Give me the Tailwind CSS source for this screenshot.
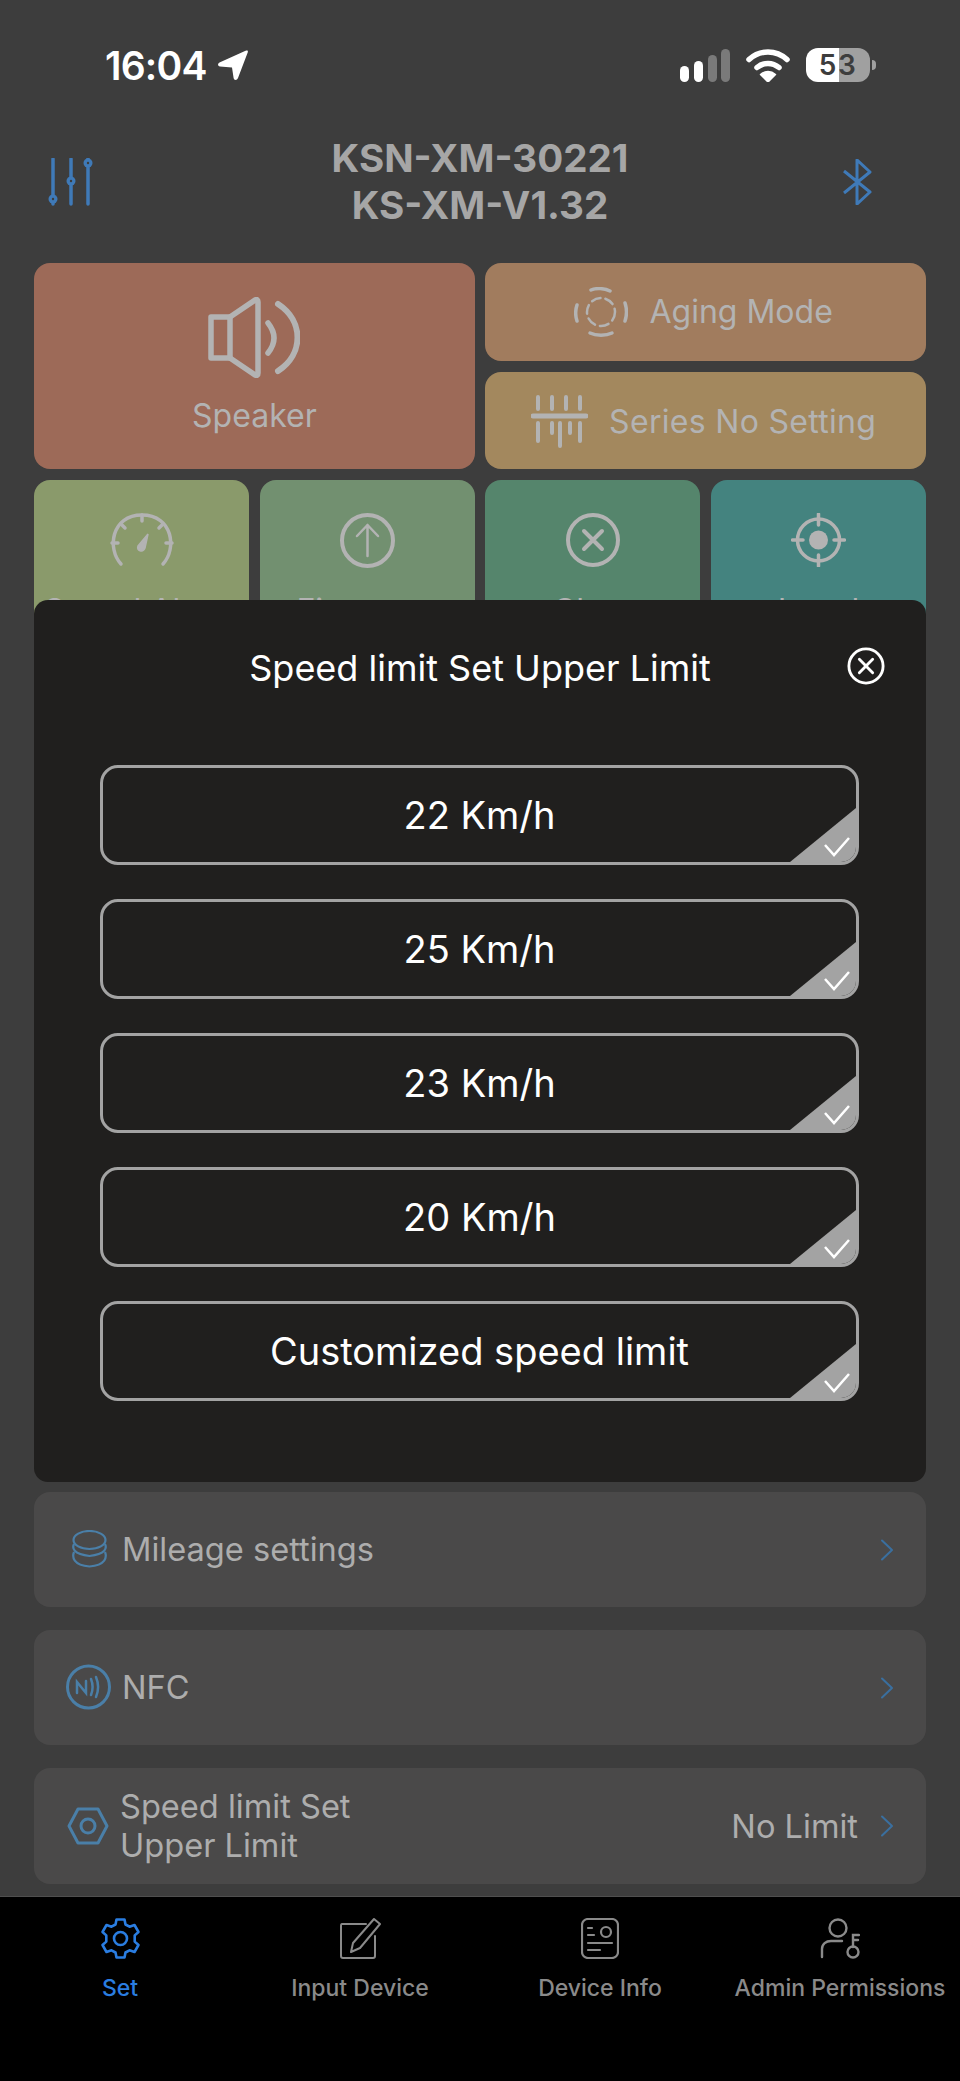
<!DOCTYPE html>
<html lang="en">
<head>
    <meta charset="UTF-8">
    <meta name="viewport" content="width=device-width, initial-scale=1.0">
    <title>Device Settings</title>
    <script src="https://cdn.jsdelivr.net/npm/@tailwindcss/browser@4"></script>
</head>
<body class="bg-[#3d3d3d]">
    <div class="relative flex h-[2081px] w-[960px] flex-col overflow-hidden bg-[#3d3d3d] [font-family:Inter,sans-serif]">

        <!-- status bar -->
        <div class="flex h-[130px] shrink-0 items-center justify-between pl-[105px] pr-[84px]">
            <div class="flex items-center gap-[11px] text-[39px] leading-none font-semibold tracking-[-0.8px] text-white">
                <span>16:04</span>
                <svg class="h-[30px] w-[30px]" viewBox="0 0 30 30"><path fill="#fff" d="M29 0.5 C30 0.5 30 1.5 29.7 2.5 L20 28 C19 30.5 16 30.5 15.6 28 L14 17.5 L2 16.5 C-0.5 16 -0.5 13.5 1.5 12.5 L27 1 C28 0.6 28.5 0.5 29 0.5 Z"/></svg>
            </div>
            <div class="flex items-center">
                <svg class="h-[33px] w-[50px]" viewBox="0 0 50 33">
                    <rect x="0" y="17" width="9" height="16" rx="4.5" fill="#fff"/>
                    <rect x="14" y="12" width="9" height="21" rx="4.5" fill="#fff"/>
                    <rect x="28" y="6" width="9" height="27" rx="4.5" fill="#7a7a7a"/>
                    <rect x="41" y="0" width="9" height="33" rx="4.5" fill="#7a7a7a"/>
                </svg>
                <svg class="ml-[16px] h-[33px] w-[44px]" viewBox="0 0 44 33">
                    <path d="M3 10.5 C14 0.5 30 0.5 41 10.5" fill="none" stroke="#fff" stroke-width="5.5" stroke-linecap="round"/>
                    <path d="M11 18.5 C17.5 13 26.5 13 33 18.5" fill="none" stroke="#fff" stroke-width="5.5" stroke-linecap="round"/>
                    <path d="M22 33 L14.5 25.5 C19 21.5 25 21.5 29.5 25.5 Z" fill="#fff" stroke="#fff" stroke-width="1.5" stroke-linejoin="round"/>
                </svg>
                <div class="relative ml-[16px] flex h-[34px] w-[64px] items-center justify-center overflow-hidden rounded-[12px] bg-[linear-gradient(90deg,#fff_0,#fff_33px,#a0a0a0_33px)] text-[28px] leading-none font-semibold tracking-[1.5px] text-[#3d3d3d]">53</div>
                <div class="ml-[2px] h-[10px] w-[4px] rounded-r-full bg-[#a0a0a0]"></div>
            </div>
        </div>

        <!-- header -->
        <div class="mb-[30px] grid h-[103px] shrink-0 grid-cols-[1fr_auto_1fr] items-center">
            <svg class="ml-[47px] h-[48px] w-[48px] text-[#3f7ab8]" viewBox="0 0 48 48" fill="none" stroke="currentColor" stroke-width="3.5" stroke-linecap="round">
                <path d="M6 1 V46 M24 1 V46 M41 1 V46"/>
                <circle cx="6" cy="41" r="4.5" fill="currentColor" stroke="none"/><circle cx="6" cy="41" r="1.2" fill="#3d3d3d" stroke="none"/>
                <circle cx="24" cy="23" r="4.5" fill="currentColor" stroke="none"/><circle cx="24" cy="23" r="1.2" fill="#3d3d3d" stroke="none"/>
                <circle cx="41" cy="5" r="4.5" fill="currentColor" stroke="none"/><circle cx="41" cy="5" r="1.2" fill="#3d3d3d" stroke="none"/>
            </svg>
            <div class="text-center text-[38.6px] leading-[47px] font-bold text-[#a6a6a6]">
                <div>KSN-XM-30221</div>
                <div>KS-XM-V1.32</div>
            </div>
            <svg class="mr-[88px] h-[46px] w-[29px] justify-self-end text-[#3f7ab8]" viewBox="0 0 29 46" fill="none" stroke="currentColor" stroke-width="3" stroke-linejoin="round">
                <path d="M1 12 L27 33 L14 45 V1 L27 13 L1 34"/>
            </svg>
        </div>

        <!-- function tiles -->
        <div class="grid shrink-0 grid-cols-4 grid-rows-[98px_97px_150px] gap-x-[10.5px] gap-y-[11px] px-[34px] text-[32px] text-[#b3b3b3]">
            <div class="col-span-2 row-span-2 flex flex-col items-center rounded-[16px] bg-[#9d6a58] pt-[34px]">
                <svg class="h-[81px] w-[92px]" viewBox="0 0 92 81" fill="none" stroke="#b3b3b3" stroke-width="5.5" stroke-linejoin="round" stroke-linecap="round">
                    <path d="M3 20 H22 V61 H3 Z"/>
                    <path d="M22 20 L47 3 C49 2 50 3 50 5 V76 C50 78 49 79 47 78 L22 61"/>
                    <path d="M60 26 C68 36 68 46 60 56"/>
                    <path d="M70 7 C96 24 96 57 70 74" stroke-width="6"/>
                </svg>
                <span class="mt-[19px] leading-[38px]">Speaker</span>
            </div>
            <div class="col-span-2 flex items-center justify-center gap-[21px] rounded-[16px] bg-[#a17c5e] pr-[4px]">
                <svg class="h-[50px] w-[54px]" viewBox="0 0 54 50" fill="none" stroke="#b3b3b3" stroke-width="3.5" stroke-linecap="round">
                    <path d="M3 18 C1 24 1 28 3 34"/>
                    <path d="M51 16 C53 22 53 28 51 34"/>
                    <path d="M17 3 C22 1 30 1 36 4"/>
                    <path d="M16 46 C22 49 32 49 38 46"/>
                    <circle cx="27" cy="25" r="14" stroke-width="2.5" stroke-dasharray="9 5"/>
                </svg>
                <span>Aging Mode</span>
            </div>
            <div class="col-span-2 flex items-center justify-center gap-[21px] rounded-[16px] bg-[#a3885e] pt-[2px] pr-[4px]">
                <svg class="h-[53px] w-[57px]" viewBox="0 0 57 53" fill="none" stroke="#b3b3b3" stroke-width="4" stroke-linecap="round">
                    <path d="M2 21 H55" stroke-width="5"/>
                    <path d="M7 2 V14 M21 2 V14 M35 2 V14 M49 2 V14"/>
                    <path d="M7 28 V46 M21 28 V38 M29 28 V51 M49 28 V46 M39 28 V38"/>
                </svg>
                <span class="tracking-[0.3px]">Series No Setting</span>
            </div>
            <div class="flex flex-col items-center rounded-[16px] bg-[#8a9a6b] pt-[33px]">
                <svg class="h-[54px] w-[64px]" viewBox="0 0 64 54" fill="none" stroke="#b3b3b3" stroke-width="3.5" stroke-linecap="round">
                    <path d="M11 51 C-3 36 1 2 32 2 C63 2 67 36 53 51"/>
                    <path d="M32 2 V8 M11 11 L15 15 M53 11 L49 15 M2 30 H8 M62 30 H56"/>
                    <path d="M38 21 L35 35 C33 40 26 38 28 33 Z" fill="#b3b3b3" stroke-width="1.5"/>
                </svg>
                <span class="mt-[25px] leading-[38px]">Speed Alarm</span>
            </div>
            <div class="flex flex-col items-center rounded-[16px] bg-[#729070] pt-[33px]">
                <svg class="h-[55px] w-[55px]" viewBox="0 0 55 55" fill="none" stroke="#b3b3b3" stroke-linecap="round" stroke-linejoin="round">
                    <circle cx="27.5" cy="27.5" r="25.5" stroke-width="4"/>
                    <path d="M27.5 43 V12 M17 23 L27.5 12 L38 23" stroke-width="2.5"/>
                </svg>
                <span class="mt-[24px] leading-[38px]">Firmware</span>
            </div>
            <div class="flex flex-col items-center rounded-[16px] bg-[#55856c] pt-[33px]">
                <svg class="h-[54px] w-[54px]" viewBox="0 0 54 54" fill="none" stroke="#b3b3b3" stroke-linecap="round">
                    <circle cx="27" cy="27" r="25" stroke-width="4"/>
                    <path d="M18 18 L36 36 M36 18 L18 36" stroke-width="4"/>
                </svg>
                <span class="mt-[25px] leading-[38px]">Clear</span>
            </div>
            <div class="flex flex-col items-center rounded-[16px] bg-[#44837f] pt-[33px]">
                <svg class="h-[54px] w-[55px]" viewBox="0 0 55 54" fill="none" stroke="#b3b3b3" stroke-linecap="round">
                    <circle cx="27.5" cy="27" r="21" stroke-width="3.5"/>
                    <circle cx="27.5" cy="27" r="9.5" fill="#b3b3b3" stroke="none"/>
                    <path d="M27.5 1 V12 M27.5 42 V53 M1.5 27 H12 M43 27 H53.5" stroke-width="3.5"/>
                </svg>
                <span class="mt-[25px] leading-[38px]">Local</span>
            </div>
        </div>

        <!-- settings rows, the ones above sit behind the dialog -->
        <div class="mt-auto flex shrink-0 flex-col gap-[23px] px-[34px] pb-[12px] text-[32.6px] text-[#adadad]">
            <div class="flex h-[115px] items-center justify-between rounded-[16px] bg-[#4a4949] pl-[38px] pr-[32px]">
                <div class="flex items-center gap-[15px]">
                    <svg class="h-[38px] w-[35px]" viewBox="0 0 35 38" fill="none" stroke="#4a7fa8" stroke-width="2.2">
                        <ellipse cx="17.5" cy="10" rx="16" ry="9"/>
                        <path d="M2 14 C0 18 1 24 17.5 26 C34 24 35 18 33 14"/>
                        <path d="M2 22 C0 27 1 35 17.5 36.5 C34 35 35 27 33 22"/>
                    </svg>
                    <span>Mileage settings</span>
                </div>
                <svg class="h-[22px] w-[14px]" viewBox="0 0 14 22" fill="none" stroke="#3a6f9f" stroke-width="2" stroke-linecap="round" stroke-linejoin="round"><path d="M2 1.5 L12 11 L2 20.5"/></svg>
            </div>
            <div class="flex h-[115px] items-center justify-between rounded-[16px] bg-[#4a4949] pl-[32px] pr-[32px]">
                <div class="flex items-center gap-[11px]">
                    <svg class="h-[46px] w-[45px]" viewBox="0 0 45 46" fill="none" stroke="#4a7fa8" stroke-linecap="round">
                        <circle cx="22.5" cy="23" r="21" stroke-width="3"/>
                        <path d="M11 29 V18 L20 29 V17" stroke-width="2.5"/>
                        <path d="M25 15 C27 20 27 26 25 31 M30 13 C32.5 19 32.5 27 30 33" stroke-width="2.5"/>
                    </svg>
                    <span>NFC</span>
                </div>
                <svg class="h-[22px] w-[14px]" viewBox="0 0 14 22" fill="none" stroke="#3a6f9f" stroke-width="2" stroke-linecap="round" stroke-linejoin="round"><path d="M2 1.5 L12 11 L2 20.5"/></svg>
            </div>
            <div class="flex h-[116px] items-center justify-between rounded-[16px] bg-[#4a4949] pl-[33px] pr-[32px]">
                <div class="flex items-center gap-[11px]">
                    <svg class="h-[38px] w-[42px]" viewBox="0 0 42 38" fill="none" stroke="#4a7fa8" stroke-width="3" stroke-linejoin="round">
                        <path d="M2 19 L11 2 H31 L40 19 L31 36 H11 Z"/>
                        <circle cx="21" cy="19" r="7"/>
                    </svg>
                    <span class="leading-[39px]">Speed limit Set<br>Upper Limit</span>
                </div>
                <div class="flex items-center gap-[22px]">
                    <span>No Limit</span>
                    <svg class="h-[22px] w-[14px]" viewBox="0 0 14 22" fill="none" stroke="#3a6f9f" stroke-width="2" stroke-linecap="round" stroke-linejoin="round"><path d="M2 1.5 L12 11 L2 20.5"/></svg>
                </div>
            </div>
        </div>

        <!-- tab bar -->
        <div class="grid h-[185px] shrink-0 grid-cols-4 border-t border-[#4f4f4f] bg-black pt-[21px] text-[23px] leading-[28px] font-medium text-[#8a8a8a]">
            <div class="flex flex-col items-center text-[#2a7de1]">
                <svg class="h-[41px] w-[41px]" viewBox="0 0 41 41" fill="none" stroke="currentColor" stroke-width="2.6" stroke-linejoin="round">
                    <path d="M16.5 1.5 H24.5 L25.5 6.5 L29.5 8.7 L34.5 7 L38.5 14 L34.7 17.4 V23.6 L38.5 27 L34.5 34 L29.5 32.3 L25.5 34.5 L24.5 39.5 H16.5 L15.5 34.5 L11.5 32.3 L6.5 34 L2.5 27 L6.3 23.6 V17.4 L2.5 14 L6.5 7 L11.5 8.7 L15.5 6.5 Z"/>
                    <circle cx="20.5" cy="20.5" r="6.5"/>
                </svg>
                <span class="mt-[15px]">Set</span>
            </div>
            <div class="flex flex-col items-center">
                <svg class="h-[41px] w-[41px]" viewBox="0 0 41 41" fill="none" stroke="currentColor" stroke-width="2" stroke-linejoin="round" stroke-linecap="round">
                    <path d="M26 6 H2 C1 6 1 7 1 8 V38 C1 39 2 40 3 40 H33 C34 40 35 39 35 38 V18"/>
                    <path d="M34 1 L40 6 L20 30 L11 34 L13 25 Z"/>
                </svg>
                <span class="mt-[15px]">Input Device</span>
            </div>
            <div class="flex flex-col items-center">
                <svg class="h-[41px] w-[38px]" viewBox="0 0 38 41" fill="none" stroke="currentColor" stroke-width="2.2" stroke-linecap="round">
                    <rect x="1" y="1" width="36" height="39" rx="6"/>
                    <circle cx="25" cy="14" r="5"/>
                    <path d="M7 10 H11 M7 17 H13 M7 25 H31 M7 32 H19"/>
                </svg>
                <span class="mt-[15px]">Device Info</span>
            </div>
            <div class="flex flex-col items-center">
                <svg class="h-[41px] w-[40px]" viewBox="0 0 40 41" fill="none" stroke="currentColor" stroke-width="2.4" stroke-linecap="round">
                    <circle cx="18" cy="10" r="8.5"/>
                    <path d="M2 39 V31 C2 26 6 23 11 23 H22"/>
                    <circle cx="33" cy="34" r="5.5"/>
                    <path d="M33 29 V17 H39 M33 22 H38"/>
                </svg>
                <span class="mt-[15px] whitespace-nowrap">Admin Permissions</span>
            </div>
        </div>

        <!-- speed limit dialog -->
        <div class="absolute left-[34px] top-[600px] flex h-[882px] w-[892px] flex-col rounded-[14px] bg-[#201f1e] text-white">
            <div class="relative flex h-[136px] shrink-0 items-center justify-center text-[36px]">
                <span>Speed limit Set Upper Limit</span>
                <svg class="absolute right-[41px] top-[47px] h-[38px] w-[38px]" viewBox="0 0 40 40" fill="none" stroke="#fff" stroke-linecap="round">
                    <circle cx="20" cy="20" r="18" stroke-width="3"/>
                    <path d="M13 13 L27 27 M27 13 L13 27" stroke-width="3"/>
                </svg>
            </div>
            <div class="mt-[29px] flex flex-col gap-[34px] pl-[66px] pr-[67px] text-[38px]">
                <button class="relative flex h-[100px] items-center justify-center overflow-hidden rounded-[18px] border-[3px] border-[#a3a3a3]">22 Km/h
                    <svg class="absolute bottom-0 right-0 h-[54px] w-[66px]" viewBox="0 0 66 54"><path d="M66 0 V54 H0 Z" fill="#a3a3a3"/><path d="M35 37 L44 47 L59 30" fill="none" stroke="#fff" stroke-width="2.5"/></svg>
                </button>
                <button class="relative flex h-[100px] items-center justify-center overflow-hidden rounded-[18px] border-[3px] border-[#a3a3a3]">25 Km/h
                    <svg class="absolute bottom-0 right-0 h-[54px] w-[66px]" viewBox="0 0 66 54"><path d="M66 0 V54 H0 Z" fill="#a3a3a3"/><path d="M35 37 L44 47 L59 30" fill="none" stroke="#fff" stroke-width="2.5"/></svg>
                </button>
                <button class="relative flex h-[100px] items-center justify-center overflow-hidden rounded-[18px] border-[3px] border-[#a3a3a3]">23 Km/h
                    <svg class="absolute bottom-0 right-0 h-[54px] w-[66px]" viewBox="0 0 66 54"><path d="M66 0 V54 H0 Z" fill="#a3a3a3"/><path d="M35 37 L44 47 L59 30" fill="none" stroke="#fff" stroke-width="2.5"/></svg>
                </button>
                <button class="relative flex h-[100px] items-center justify-center overflow-hidden rounded-[18px] border-[3px] border-[#a3a3a3]">20 Km/h
                    <svg class="absolute bottom-0 right-0 h-[54px] w-[66px]" viewBox="0 0 66 54"><path d="M66 0 V54 H0 Z" fill="#a3a3a3"/><path d="M35 37 L44 47 L59 30" fill="none" stroke="#fff" stroke-width="2.5"/></svg>
                </button>
                <button class="relative flex h-[100px] items-center justify-center overflow-hidden rounded-[18px] border-[3px] border-[#a3a3a3]">Customized speed limit
                    <svg class="absolute bottom-0 right-0 h-[54px] w-[66px]" viewBox="0 0 66 54"><path d="M66 0 V54 H0 Z" fill="#a3a3a3"/><path d="M35 37 L44 47 L59 30" fill="none" stroke="#fff" stroke-width="2.5"/></svg>
                </button>
            </div>
        </div>
    </div>
</body>
</html>
